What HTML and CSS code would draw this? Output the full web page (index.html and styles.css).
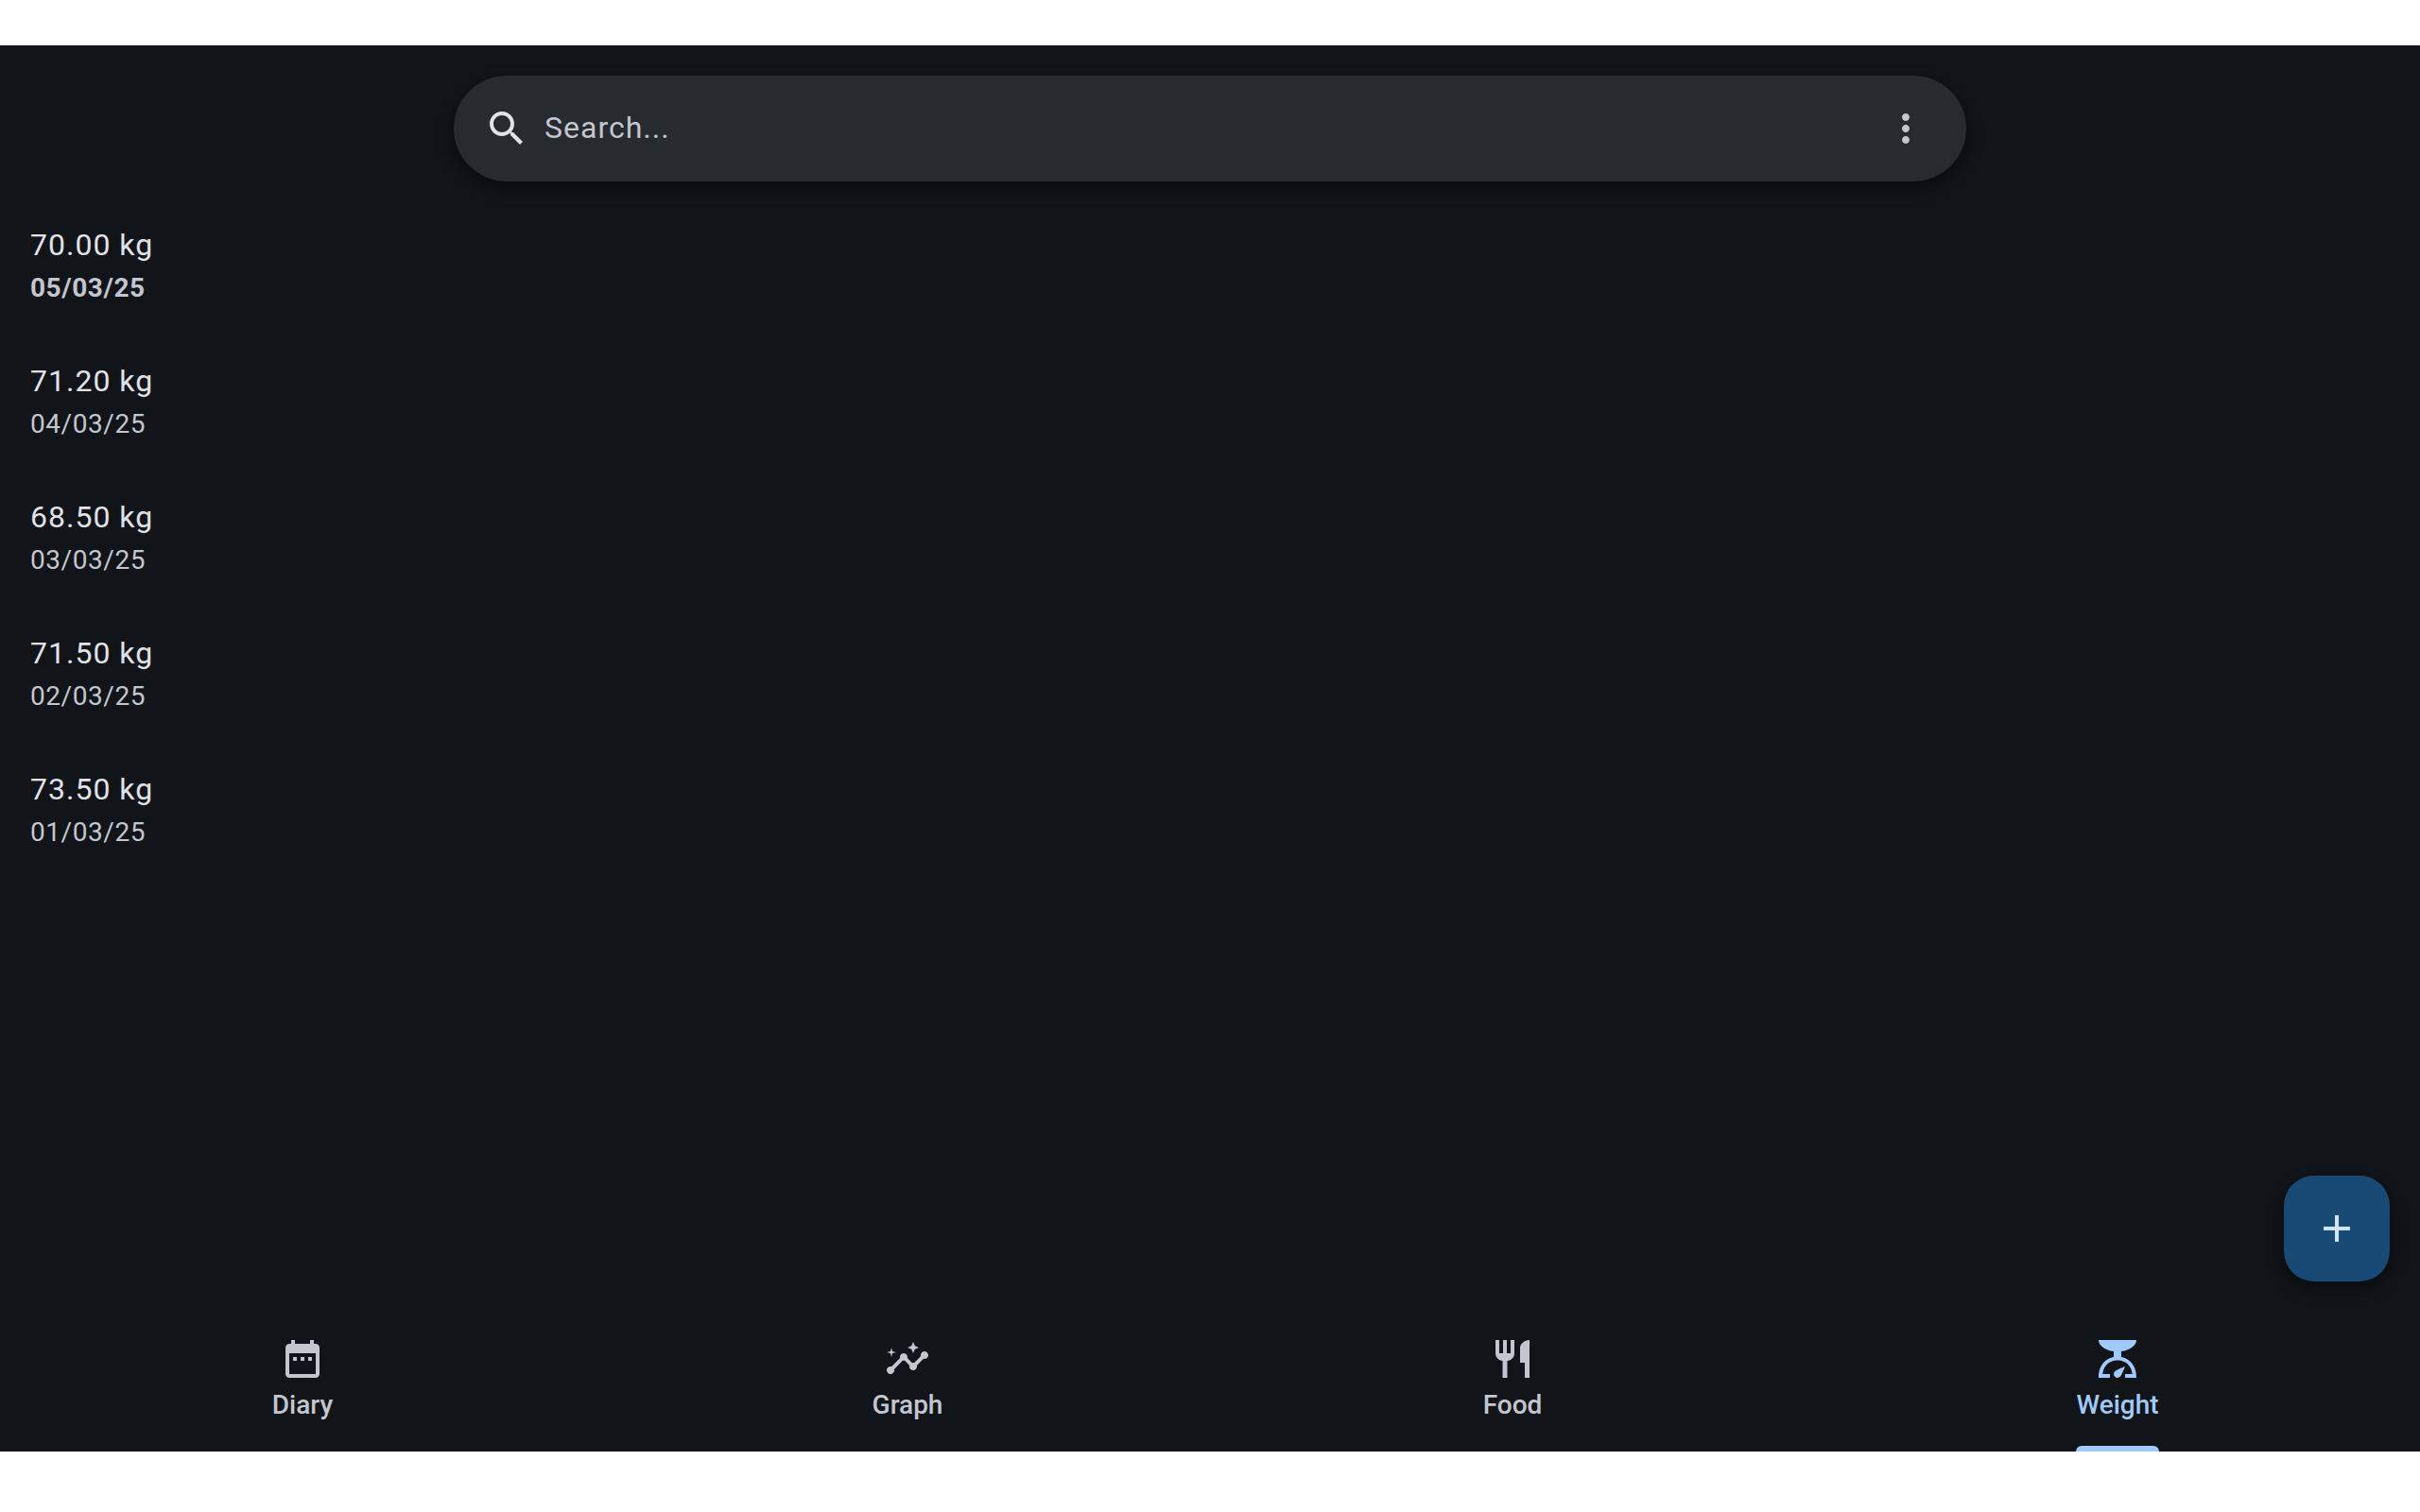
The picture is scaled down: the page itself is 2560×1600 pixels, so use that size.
FILE: index.html
```html
<!DOCTYPE html>
<html lang="en">
<head>
<meta charset="utf-8">
<meta name="viewport" content="width=device-width, initial-scale=1">
<title>Weight</title>
<link rel="stylesheet" href="styles.css">
</head>
<body>
<div class="app">
  <main class="content">
    <form class="search" role="search">
      <label class="search-label" for="query" aria-label="Search">
        <svg class="icon" viewBox="0 0 24 24" aria-hidden="true"><path d="M15.5 14h-.79l-.28-.27C15.41 12.59 16 11.11 16 9.5 16 5.91 13.09 3 9.5 3S3 5.91 3 9.5 5.91 16 9.5 16c1.61 0 3.09-.59 4.23-1.57l.27.28v.79l5 4.99L20.49 19l-4.99-5zm-6 0C7.01 14 5 11.99 5 9.5S7.01 5 9.5 5 14 7.01 14 9.5 11.99 14 9.5 14z"/></svg>
      </label>
      <input class="search-input" id="query" type="text" placeholder="Search...">
      <button class="menu" type="button" aria-label="More options">
        <svg class="icon" viewBox="0 0 24 24" aria-hidden="true"><path d="M12 8c1.100 0 2-.9 2-2s-.9-2-2-2-2 .9-2 2 .9 2 2 2zm0 2c-1.100 0-2 .9-2 2s.9 2 2 2 2-.9 2-2-.9-2-2-2zm0 6c-1.100 0-2 .9-2 2s.9 2 2 2 2-.9 2-2-.9-2-2-2z"/></svg>
      </button>
    </form>
    <ul class="entries">
      <li class="entry"><span class="weight">70.00 kg</span><time class="date date-today" datetime="2025-03-05">05/03/25</time></li>
      <li class="entry"><span class="weight">71.20 kg</span><time class="date" datetime="2025-03-04">04/03/25</time></li>
      <li class="entry"><span class="weight">68.50 kg</span><time class="date" datetime="2025-03-03">03/03/25</time></li>
      <li class="entry"><span class="weight">71.50 kg</span><time class="date" datetime="2025-03-02">02/03/25</time></li>
      <li class="entry"><span class="weight">73.50 kg</span><time class="date" datetime="2025-03-01">01/03/25</time></li>
    </ul>
    <button class="fab" type="button" aria-label="Add weight">
      <svg class="icon" viewBox="0 0 24 24" aria-hidden="true"><path d="M19 13h-6v6h-2v-6H5v-2h6V5h2v6h6v2z"/></svg>
    </button>
  </main>
  <nav class="tabs">
    <a class="tab" href="#diary">
      <svg class="icon" viewBox="0 0 24 24" aria-hidden="true"><path d="M9 11H7v2h2v-2zm4 0h-2v2h2v-2zm4 0h-2v2h2v-2zm2-7h-1V2h-2v2H8V2H6v2H5c-1.110 0-1.990.9-1.990 2L3 20c0 1.100.89 2 2 2h14c1.100 0 2-.9 2-2V6c0-1.100-.9-2-2-2zm0 16H5V9h14v11z"/></svg>
      <span class="tab-label">Diary</span>
    </a>
    <a class="tab" href="#graph">
      <svg class="icon" viewBox="0 0 24 24" aria-hidden="true"><path d="M21 8c-1.450 0-2.260 1.440-1.930 2.510l-3.550 3.560c-.3-.09-.74-.09-1.040 0l-2.550-2.550C12.270 10.450 11.460 9 10 9c-1.450 0-2.270 1.440-1.930 2.520l-4.560 4.550C2.440 15.740 1 16.550 1 18c0 1.100.9 2 2 2 1.450 0 2.260-1.440 1.930-2.510l4.550-4.560c.3.09.74.09 1.040 0l2.550 2.550C12.730 16.550 13.540 18 15 18c1.450 0 2.270-1.440 1.930-2.520l3.560-3.550C21.560 12.260 23 11.450 23 10c0-1.100-.9-2-2-2z"/><path d="M15 9l.94-2.070L18 6l-2.060-.93L15 3l-.92 2.070L12 6l2.080.93zM3.500 11L4 9l2-.5L4 8l-.5-2L3 8l-2 .5L3 9z"/></svg>
      <span class="tab-label">Graph</span>
    </a>
    <a class="tab" href="#food">
      <svg class="icon" viewBox="0 0 24 24" aria-hidden="true"><path d="M11 9H9V2H7v7H5V2H3v7c0 2.120 1.660 3.840 3.750 3.970V22h2.500v-9.030C11.340 12.840 13 11.120 13 9V2h-2v7zm5-3v8h2.500v8H21V2c-2.760 0-5 2.240-5 4z"/></svg>
      <span class="tab-label">Food</span>
    </a>
    <a class="tab tab-active" href="#weight" aria-current="page">
      <svg class="icon" viewBox="0 0 24 24" aria-hidden="true"><path d="M14 11V8c4.560-.58 8-3.100 8-6H2c0 2.900 3.440 5.420 8 6v3c-3.680.73-8 3.610-8 11h6v-2H4.130c.93-6.830 6.650-7.200 7.870-7.200s6.940.37 7.870 7.200H16v2h6c0-7.390-4.320-10.270-8-11z"/><path d="M13.410 21.410C13.050 21.780 12.550 22 12 22c-1.100 0-2-.9-2-2 0-.55.22-1.050.59-1.410C11.390 17.790 16 16 16 16s-1.790 4.610-2.590 5.410z"/></svg>
      <span class="tab-label">Weight</span>
    </a>
  </nav>
</div>
</body>
</html>
```
FILE: styles.css
```css
* {
  box-sizing: border-box;
}

body {
  margin: 0;
  padding: 48px 0 64px;
  min-height: 100vh;
  display: flex;
  flex-direction: column;
  background: #ffffff;
  font-family: Roboto, "Liberation Sans", sans-serif;
}

.app {
  flex: 1;
  display: flex;
  flex-direction: column;
  background: #111418;
  color: #e1e2e8;
}

.content {
  position: relative;
  flex: 1;
  padding: 32px 0;
}

.icon {
  display: block;
  width: 48px;
  height: 48px;
  fill: currentColor;
}

button {
  border: 0;
  padding: 0;
  background: none;
  font: inherit;
  cursor: pointer;
}

.search {
  display: flex;
  align-items: center;
  gap: 16px;
  max-width: 1600px;
  height: 112px;
  margin: 0 auto 16px;
  padding: 0 40px 0 32px;
  border-radius: 56px;
  background: #272a2f;
  box-shadow: 0 8px 20px rgba(0, 0, 0, 0.3), 0 2px 6px rgba(0, 0, 0, 0.15);
}

.search-input {
  flex: 1;
  min-width: 0;
  height: 48px;
  padding: 0 0 2px;
  border: 0;
  outline: 0;
  background: none;
  color: #e1e2e8;
  font: inherit;
  font-size: 32px;
  letter-spacing: 1px;
}

.search-input::placeholder {
  color: #c3c6cf;
  opacity: 1;
}

.menu {
  color: #c3c6cf;
}

.entries {
  margin: 0;
  padding: 0;
  list-style: none;
}

.entry {
  display: flex;
  flex-direction: column;
  justify-content: center;
  gap: 2px;
  height: 144px;
  padding: 0 32px;
}

.weight {
  font-size: 32px;
  line-height: 48px;
  letter-spacing: 1px;
}

.date {
  color: #c3c6cf;
  font-size: 28px;
  line-height: 40px;
  letter-spacing: 0.02em;
}

.date-today {
  font-weight: 700;
}

.fab {
  position: absolute;
  right: 32px;
  bottom: 32px;
  display: flex;
  align-items: center;
  justify-content: center;
  width: 112px;
  height: 112px;
  border-radius: 32px;
  background: #194975;
  color: #d1e4ff;
  box-shadow: 0 8px 20px rgba(0, 0, 0, 0.3), 0 2px 6px rgba(0, 0, 0, 0.15);
}

.tabs {
  display: grid;
  grid-template-columns: repeat(4, 1fr);
}

.tab {
  display: flex;
  flex-direction: column;
  align-items: center;
  gap: 5px;
  height: 148px;
  padding-top: 26px;
  color: #c3c6cf;
  text-decoration: none;
}

.tab-label {
  display: flex;
  flex: 1;
  flex-direction: column;
  justify-content: space-between;
  font-size: 28px;
  font-weight: 500;
  line-height: 40px;
}

.tab-active {
  color: #a0cafd;
}

.tab-active .tab-label::after {
  content: "";
  height: 6px;
  border-radius: 6px 6px 0 0;
  background: currentColor;
}
```
